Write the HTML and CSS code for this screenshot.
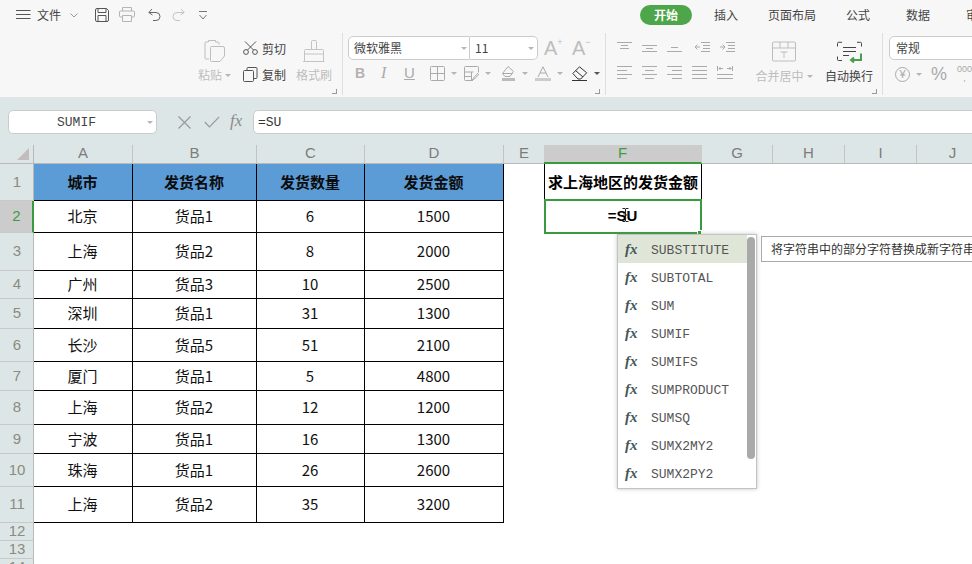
FILE: index.html
```html
<!DOCTYPE html>
<html lang="zh-CN">
<head>
<meta charset="utf-8">
<title>表格</title>
<link rel="stylesheet" href="styles.css">
</head>
<body>
<header class="ribbon">
  <div class="topbar">
    <div class="quick">
      <svg class="ic-menu" width="15" height="10" viewBox="0 0 15 10"><path d="M0 .5h14.5M0 4.5h14.5M0 8.5h14.5" stroke="#555" fill="none"/></svg>
      <span class="file">文件</span>
      <svg class="ic-chev" width="8" height="5" viewBox="0 0 8 5"><path d="M.5.5 4 4 7.5.5" stroke="#999" fill="none"/></svg>
      <svg class="ic-save" width="14" height="14" viewBox="0 0 14 14"><path d="M.5 2a1.5 1.5 0 0 1 1.5-1.5h9.500l2 2V12a1.500 1.500 0 0 1-1.500 1.500H2A1.500 1.500 0 0 1 .5 12zM3 .5v4h8v-4M3 13.500V7.500h8v6" stroke="#555" fill="none"/></svg>
      <svg class="ic-print" width="16" height="15" viewBox="0 0 16 15"><path d="M3.500 4V.5h9V4M3.500 10h-2a1 1 0 0 1-1-1V5a1 1 0 0 1 1-1h13a1 1 0 0 1 1 1v4a1 1 0 0 1-1 1h-2M3.500 8.500h9v6h-9z" stroke="#b5b5b5" fill="none"/></svg>
      <svg class="ic-undo" width="13" height="13" viewBox="0 0 13 13"><path d="M4 1 .8 4.500 4.500 7M1 4.500h7a4 4 0 0 1 0 8H5" stroke="#666" fill="none"/></svg>
      <svg class="ic-redo" width="13" height="13" viewBox="0 0 13 13"><path d="M9 1l3.200 3.500L8.500 7M12 4.500H5a4 4 0 0 0 0 8h3" stroke="#c4c4c4" fill="none"/></svg>
      <svg class="ic-more" width="9" height="9" viewBox="0 0 9 9"><path d="M0 .5h8M.5 4 4 8l3.500-4" stroke="#777" fill="none"/></svg>
    </div>
    <nav class="tabs">
      <span class="tab-on">开始</span>
      <span class="tab tab-first">插入</span>
      <span class="tab">页面布局</span>
      <span class="tab">公式</span>
      <span class="tab tab-far">数据</span>
      <span class="tab tab-far">审阅</span>
    </nav>
  </div>
  <div class="tools">
    <section class="group g-clip">
      <div class="big w35">
        <svg width="23" height="22" viewBox="0 0 23 22"><path d="M16 4.500V3a1 1 0 0 0-1-1h-2.500V.5h-7V2H3a1 1 0 0 0-1 1v15a1 1 0 0 0 1 1h3M7.500 7.500a1 1 0 0 1 1-1H20a1.500 1.500 0 0 1 1.500 1.500v8L17 21.500H8.500a1 1 0 0 1-1-1z" stroke="#bdbdbd" fill="none"/></svg>
        <span class="lbl off">粘贴<i class="caret"></i></span>
      </div>
      <div class="small-col">
        <div class="row-btn"><svg width="15" height="14" viewBox="0 0 15 14"><path d="M2 .5 10.500 9M13 .5 4.500 9" stroke="#555" fill="none"/><circle cx="3" cy="11" r="2.400" stroke="#555" fill="none"/><circle cx="12" cy="11" r="2.400" stroke="#555" fill="none"/></svg><span>剪切</span></div>
        <div class="row-btn"><svg width="15" height="15" viewBox="0 0 15 15"><path d="M4 3V1.500a1 1 0 0 1 1-1h8a1 1 0 0 1 1 1v9a1 1 0 0 1-1 1h-2.500M.5 4.500a1 1 0 0 1 1-1h8a1 1 0 0 1 1 1v9a1 1 0 0 1-1 1h-8a1 1 0 0 1-1-1z" stroke="#555" fill="none"/></svg><span>复制</span></div>
      </div>
      <div class="big w36">
        <svg width="22" height="22" viewBox="0 0 22 22"><path d="M8.500 9V1.500a1 1 0 0 1 1-1h3a1 1 0 0 1 1 1V9M1.500 21V10.500a1 1 0 0 1 1-1h17a1 1 0 0 1 1 1V21M0 21.500h21.500M1.500 14h19" stroke="#c4c4c4" fill="none"/></svg>
        <span class="lbl off">格式刷</span>
      </div>
      <i class="launch"></i>
    </section>
    <section class="group g-font">
      <div class="fontbox">
        <div class="fname">微软雅黑<i class="caret"></i></div>
        <div class="fsize">11<i class="caret"></i></div>
        <div class="grow-a"><span class="big-a">A</span><sup>+</sup></div>
        <div class="shrink-a"><span class="big-a">A</span><sup>−</sup></div>
      </div>
      <div class="fmt">
        <span class="slot w26 t-b">B</span>
        <span class="slot w23 t-i">I</span>
        <span class="slot w26 t-u">U</span>
        <span class="slot w34"><svg width="15" height="15" viewBox="0 0 15 15"><path d="M.5 1.500a1 1 0 0 1 1-1h12a1 1 0 0 1 1 1v12a1 1 0 0 1-1 1h-12a1 1 0 0 1-1-1zM7.500 .5v14M.5 7.500h14" stroke="#aaa" fill="none"/></svg><i class="caret"></i></span>
        <span class="slot w37"><svg width="15" height="15" viewBox="0 0 15 15"><path d="M.5 1.500a1 1 0 0 1 1-1h12a1 1 0 0 1 1 1V6M.5 1.500v12a1 1 0 0 0 1 1H9M.5 6h9M.5 10.500h7M7.500 6v8" stroke="#aaa" fill="none"/><path d="M14.500 6.500 9.500 12 8.500 14l2-1 5-5.500" stroke="#aaa" fill="none"/></svg><i class="caret"></i></span>
        <span class="slot w34"><svg width="15" height="15" viewBox="0 0 15 15"><path d="M7 .5 12.500 5.500 9 10.500H4L1.500 7.500zM1.500 7.500h10" stroke="#aaa" fill="none"/><path d="M1 12h13v3H1z" fill="#bbb"/></svg><i class="caret"></i></span>
        <span class="slot w37"><svg width="16" height="15" viewBox="0 0 16 15"><path d="M3 11 8 .8 13 11M5 7h6" stroke="#aaa" fill="none"/><path d="M0 12h16v3H0z" fill="#ccc"/></svg><i class="caret"></i></span>
        <span class="slot"><svg width="16" height="15" viewBox="0 0 16 15"><path d="M.8 7.500 7.500.8l7.200 6-6 6.200H6zM3.500 4.500l7.500 6.500M0 14.500h15" stroke="#333" fill="none"/></svg><i class="caret caret-d"></i></span>
      </div>
      <i class="launch"></i>
    </section>
    <section class="group g-align">
      <div class="aligns">
        <div class="arow">
          <svg class="al" width="15" height="10" viewBox="0 0 15 10"><path d="M0 .5h15M4 3.500h7M3 6.500h9" stroke="#aaa" fill="none"/></svg>
          <svg class="al" width="15" height="10" viewBox="0 0 15 10"><path d="M0 3.500h15M4 6.500h7M0 9.500h15" stroke="#aaa" fill="none"/></svg>
          <svg class="al" width="15" height="10" viewBox="0 0 15 10"><path d="M4 5.500h7M0 9.500h15" stroke="#aaa" fill="none"/></svg>
          <svg class="al al-ind" width="15" height="11" viewBox="0 0 15 11"><path d="M6 .5h9M8 3.500h7M8 6.500h7M6 9.500h9M5 5H0M2.500 2.500 0 5l2.500 2.500" stroke="#aaa" fill="none"/></svg>
          <svg class="al" width="15" height="11" viewBox="0 0 15 11"><path d="M6 .5h9M8 3.500h7M8 6.500h7M6 9.500h9M0 5h5M2.500 2.500 5 5 2.500 7.500" stroke="#aaa" fill="none"/></svg>
        </div>
        <div class="arow">
          <svg class="al" width="15" height="13" viewBox="0 0 15 13"><path d="M0 .5h15M0 4.500h10M0 8.500h15M0 12.500h10" stroke="#aaa" fill="none"/></svg>
          <svg class="al" width="15" height="13" viewBox="0 0 15 13"><path d="M0 .5h15M3 4.500h9M0 8.500h15M3 12.500h9" stroke="#aaa" fill="none"/></svg>
          <svg class="al" width="15" height="13" viewBox="0 0 15 13"><path d="M0 .5h15M5 4.500h10M0 8.500h15M5 12.500h10" stroke="#aaa" fill="none"/></svg>
          <svg class="al" width="15" height="13" viewBox="0 0 15 13"><path d="M0 .5h15M0 4.500h15M0 8.500h15M0 12.500h15" stroke="#aaa" fill="none"/></svg>
          <svg class="al" width="16" height="13" viewBox="0 0 16 13"><path d="M.5 0v5M15.500 0v5M6 2.500H2l1.500-1.500M2 2.500 3.500 4M10 2.500h4L12.500 1M14 2.500 12.500 4M0 8.500h16M0 12.500h16" stroke="#aaa" fill="none"/></svg>
        </div>
      </div>
      <div class="big w56 merge">
        <svg width="24" height="21" viewBox="0 0 24 21"><path d="M1.500.5h21a1 1 0 0 1 1 1v17a1 1 0 0 1-1 1h-21a1 1 0 0 1-1-1v-17a1 1 0 0 1 1-1zM.5 6.500h23M8 .5v6M16 .5v6M8.500 10.500h7M12 10.500v6" stroke="#bdbdbd" fill="none"/></svg>
        <span class="lbl off">合并居中<i class="caret"></i></span>
      </div>
      <div class="big w48 wrap">
        <svg width="25" height="21" viewBox="0 0 25 21"><path d="M5 .8H1.500a1 1 0 0 0-1 1V5M20 .8h3.500a1 1 0 0 1 1 1V5M.5 15v3a1 1 0 0 0 1 1H5M6 6h13M6 10h13M6 14h6" stroke="#444" fill="none"/><path d="M24 12v6.500H14M17 16l-3 2.500 3 2.500" stroke="#4aa04a" stroke-width="2" fill="none"/></svg>
        <span class="lbl on">自动换行</span>
      </div>
      <i class="launch"></i>
    </section>
    <section class="group g-num">
      <div class="numbox">常规</div>
      <div class="numrow">
        <span class="yen">¥</span><i class="caret"></i>
        <span class="pct">%</span>
        <span class="thou">000<em>,</em></span>
      </div>
    </section>
  </div>
</header>

<div class="formula">
  <div class="namebox">SUMIF<i class="caret"></i></div>
  <svg class="f-x" width="13" height="13" viewBox="0 0 13 13"><path d="M.5.5l12 12M12.500.5l-12 12" stroke="#999" stroke-width="1.200" fill="none"/></svg>
  <svg class="f-ok" width="16" height="12" viewBox="0 0 16 12"><path d="M.8 6 5.500 11 15.200.8" stroke="#999" stroke-width="1.200" fill="none"/></svg>
  <span class="f-fx">fx</span>
  <div class="finput">=SU</div>
</div>

<main class="sheet">
  <div class="grid">
    <div class="corner"><svg width="12" height="12" viewBox="0 0 12 12"><path d="M12 0v12H0z" fill="#c2bcbc"/></svg></div>
    <div class="ch">A</div><div class="ch">B</div><div class="ch">C</div><div class="ch">D</div><div class="ch">E</div><div class="ch ch-on">F</div><div class="ch">G</div><div class="ch">H</div><div class="ch">I</div><div class="ch">J</div>

    <div class="rh">1</div><div class="c hd">城市</div><div class="c hd">发货名称</div><div class="c hd">发货数量</div><div class="c hd">发货金额</div><div class="c q">求上海地区的发货金额</div>
    <div class="rh rh-on">2</div><div class="c">北京</div><div class="c">货品1</div><div class="c">6</div><div class="c">1500</div><div class="c active">=SU</div>
    <div class="rh">3</div><div class="c">上海</div><div class="c">货品2</div><div class="c">8</div><div class="c">2000</div>
    <div class="rh">4</div><div class="c">广州</div><div class="c">货品3</div><div class="c">10</div><div class="c">2500</div>
    <div class="rh">5</div><div class="c">深圳</div><div class="c">货品1</div><div class="c">31</div><div class="c">1300</div>
    <div class="rh">6</div><div class="c">长沙</div><div class="c">货品5</div><div class="c">51</div><div class="c">2100</div>
    <div class="rh">7</div><div class="c">厦门</div><div class="c">货品1</div><div class="c">5</div><div class="c">4800</div>
    <div class="rh">8</div><div class="c">上海</div><div class="c">货品2</div><div class="c">12</div><div class="c">1200</div>
    <div class="rh">9</div><div class="c">宁波</div><div class="c">货品1</div><div class="c">16</div><div class="c">1300</div>
    <div class="rh">10</div><div class="c">珠海</div><div class="c">货品1</div><div class="c">26</div><div class="c">2600</div>
    <div class="rh">11</div><div class="c">上海</div><div class="c">货品2</div><div class="c">35</div><div class="c">3200</div>
    <div class="rh">12</div>
    <div class="rh">13</div>
    <div class="rh">14</div>
  </div>

  <svg class="ibeam" width="7" height="14" viewBox="0 0 7 14"><path d="M.5.500h2.500L3.500 1 4 .5h2.500M3.500 1v12M.5 13.500H3l.5-.5.5.5h2.500M1.500 7h4" stroke="#222" fill="none"/></svg>
  <i class="handle"></i>

  <div class="popup">
    <ul class="fnlist">
      <li class="fn-on"><b>fx</b>SUBSTITUTE</li>
      <li><b>fx</b>SUBTOTAL</li>
      <li><b>fx</b>SUM</li>
      <li><b>fx</b>SUMIF</li>
      <li><b>fx</b>SUMIFS</li>
      <li><b>fx</b>SUMPRODUCT</li>
      <li><b>fx</b>SUMSQ</li>
      <li><b>fx</b>SUMX2MY2</li>
      <li><b>fx</b>SUMX2PY2</li>
    </ul>
    <i class="thumb"></i>
  </div>
  <div class="tip">将字符串中的部分字符替换成新字符串</div>
</main>
</body>
</html>
```

FILE: styles.css
```css
* { box-sizing: border-box; }
html, body { margin: 0; height: 564px; width: 972px; overflow: hidden; background: #fff; }
body { font-family: "Noto Sans CJK SC", "Liberation Sans", sans-serif; color: #333; font-size: 12px; }
i { display: block; font-style: normal; }

/* ribbon */
.ribbon { height: 98px; background: #f7f7f7; border-bottom: 1px solid #e2e5e5; }
.topbar { height: 30px; display: flex; white-space: nowrap; overflow: hidden; }
.quick { width: 640px; display: flex; align-items: flex-start; flex: none; padding-left: 16px; }
.quick svg { flex: none; }
.ic-menu { margin-top: 10px; }
.file { margin: 6px 0 0 6px; line-height: 18px; color: #444; }
.ic-chev { margin: 13px 0 0 9px; }
.ic-save { margin: 8px 0 0 17px; }
.ic-print { margin: 7px 0 0 10px; }
.ic-undo { margin: 8px 0 0 13px; }
.ic-redo { margin: 8px 0 0 11px; }
.ic-more { margin: 11px 0 0 14px; }
.tabs { display: flex; align-items: flex-start; gap: 30px; flex: none; }
.tab-on { width: 52px; height: 20px; margin-top: 5px; border-radius: 10px; background: #4ea64a; color: #fff; font-weight: 700; text-align: center; line-height: 20px; }
.tab { line-height: 18px; margin-top: 6px; color: #444; }
.tab-first { margin-left: -8px; }
.tab-far { margin-left: 6px; }

.tools { height: 67px; display: flex; padding-left: 197px; }
.group { position: relative; display: flex; height: 62px; margin-top: 3px; border-right: 1px solid #dbdfdf; flex: none; }
.launch { position: absolute; right: 5px; bottom: 1px; width: 5px; height: 5px; border-right: 1px solid #999; border-bottom: 1px solid #999; }

.big { display: flex; flex-direction: column; align-items: center; padding-top: 7px; flex: none; }
.big svg { height: 22px; flex: none; }
.lbl { margin-top: 4px; line-height: 18px; white-space: nowrap; display: flex; align-items: center; }
.off { color: #bdbdbd; }
.on { color: #444; }
.merge svg, .wrap svg { margin-top: 1px; }
.caret { width: 0; height: 0; border: 3px solid transparent; border-top: 3px solid #b5b5b5; border-bottom-width: 0; margin-left: 3px; flex: none; }
.caret-d { border-top-color: #555; }
.w35 { width: 35px; }
.w36 { width: 36px; margin-left: 11px; }
.w48 { width: 48px; margin-left: 13px; }
.w56 { width: 56px; margin-left: 11px; }

.g-clip { width: 146px; }
.small-col { margin-left: 11px; width: 42px; display: flex; flex-direction: column; padding-top: 3px; }
.row-btn { display: flex; align-items: center; gap: 4px; height: 24px; color: #444; white-space: nowrap; }
.row-btn + .row-btn { margin-top: 2px; }
.row-btn svg { flex: none; }

.g-font { width: 263px; flex-direction: column; padding: 3px 0 0 5px; }
.fontbox { display: flex; height: 24px; }
.fname, .fsize { background: #fff; border: 1px solid #ccc; display: flex; align-items: center; justify-content: space-between; line-height: 18px; color: #444; padding-left: 5px; height: 24px; }
.fname { width: 122px; border-radius: 5px 0 0 5px; }
.fsize { width: 68px; border-left: 0; border-radius: 0 5px 5px 0; padding-right: 3px; }
.fname .caret { margin-right: 2px; }
.grow-a, .shrink-a { display: flex; color: #bdbdbd; line-height: 24px; }
.grow-a { margin-left: 6px; width: 28px; }
.shrink-a { width: 20px; }
.big-a { font: 400 20px/24px "Liberation Sans", sans-serif; }
.fontbox sup { font: 400 9px/12px "Liberation Sans", sans-serif; vertical-align: baseline; }
.fmt { display: flex; align-items: center; height: 26px; padding-left: 7px; }
.slot { display: flex; align-items: center; flex: none; gap: 3px; height: 26px; }
.slot .caret { margin-left: 3px; }
.w23 { width: 23px; }
.w26 { width: 26px; }
.w34 { width: 34px; }
.w37 { width: 37px; }
.t-b { font: 700 14px/26px "Liberation Sans", sans-serif; color: #b8b0b0; }
.t-i { font: italic 400 16px/26px "Liberation Serif", serif; color: #aaa; }
.t-u { font: 400 15px/26px "Liberation Sans", sans-serif; color: #aaa; text-decoration: underline; }

.g-align { width: 277px; padding-left: 11px; }
.aligns { width: 128px; flex: none; padding-top: 9px; display: flex; flex-direction: column; gap: 11px; }
.arow { display: flex; gap: 10px; height: 13px; }
.al { flex: none; }
.al-ind { margin-left: 3px; }

.g-num { width: 120px; flex-direction: column; padding: 3px 0 0 6px; border-right: 0; }
.numbox { width: 115px; height: 24px; background: #fff; border: 1px solid #ccc; border-radius: 5px; padding-left: 6px; line-height: 22px; color: #444; }
.numrow { display: flex; align-items: center; height: 26px; margin-top: 1px; padding-left: 6px; color: #aaa; }
.yen { width: 15px; height: 15px; border: 1px solid #aaa; border-radius: 50%; font: 400 11px/13px "Liberation Sans", sans-serif; text-align: center; flex: none; }
.numrow .caret { margin-left: 6px; }
.pct { margin-left: 9px; font: 400 18px/26px "Liberation Sans", sans-serif; width: 26px; flex: none; }
.thou { font: 400 9px/9px "Liberation Sans", sans-serif; }
.thou em { display: block; font-style: normal; text-align: center; }

/* formula bar */
.formula { height: 47px; background: #dde6e6; display: flex; align-items: flex-start; padding: 12px 0 0 8px; }
.namebox { position: relative; width: 149px; height: 24px; background: #fff; border: 1px solid #ccc; border-radius: 5px; font: 400 13px/24px "Liberation Mono", monospace; color: #444; text-align: center; padding-right: 12px; flex: none; }
.namebox .caret { position: absolute; right: 3px; top: 10px; }
.f-x { margin: 6px 0 0 21px; flex: none; }
.f-ok { margin: 6px 0 0 13px; flex: none; }
.f-fx { margin: 1px 0 0 10px; font: italic 400 17px/20px "Liberation Serif", serif; color: #8a8a8a; width: 16px; flex: none; }
.finput { margin-left: 7px; width: 740px; height: 24px; background: #fff; border: 1px solid #ccc; border-radius: 5px 0 0 5px; padding-left: 4px; font: 400 13px/24px "Liberation Mono", monospace; color: #333; flex: none; }

/* sheet */
.sheet { position: relative; height: 419px; overflow: hidden; background: #fff; }
.grid {
  display: grid;
  grid-template-columns: 34px 99px 124px 108px 139px 41px 157px 71px 72px 72px 72px;
  grid-template-rows: 19px 37px 32px 38px 28px 30px 33px 29px 34px 29px 33px 36px 18px 18px 18px;
  width: 1044px;
}
.corner { background: #dde6e6; border-right: 1px solid #b9b9b9; border-bottom: 1px solid #b9b9b9; padding: 3px 0 0 17px; }
.corner svg { display: block; }
.ch { background: #dde6e6; border-right: 1px solid #c3c3c3; border-bottom: 1px solid #b9b9b9; color: #7c7c7c; font: 400 15px/16px "Liberation Sans", sans-serif; text-align: center; }
.ch-on { background: #cccccc; color: #3f9b43; border-bottom: 2px solid #3a9a3e; border-right-color: #ccc; margin-left: -1px; }
.rh { grid-column: 1; background: #dde6e6; border-right: 1px solid #b9b9b9; border-bottom: 1px solid #c8c8c8; color: #8b8b80; font: 400 15px/1 "Liberation Sans", sans-serif; display: flex; align-items: center; justify-content: center; padding: 0 0 2px 1px; }
.rh-on { background: #cccccc; color: #3f9b43; border-right: 2px solid #3a9a3e; }
.c { border-right: 1px solid #000; border-bottom: 1px solid #000; display: flex; align-items: center; justify-content: center; font-size: 15px; color: #111; white-space: nowrap; padding: 0 1px 2px 0; }
.hd { background: #5b9bd6; font-weight: 700; color: #0c0c0c; }
.q, .active { grid-column: 7; font-weight: 700; color: #000; }
.q { border-left: 1px solid #000; margin-left: -1px; padding-right: 0; }
.active { border: 2px solid #3a9a3e; margin: -2px 0 -1px -1px; font-family: "Liberation Sans", sans-serif; }

.ibeam { position: absolute; left: 622px; top: 63px; }
.handle { position: absolute; left: 697px; top: 85px; width: 5px; height: 5px; background: #3a9a3e; border: 1px solid #fff; }

.popup { position: absolute; left: 617px; top: 89px; width: 140px; height: 255px; background: #fff; border: 1px solid #c0c4c4; box-shadow: 0 0 4px rgba(120, 130, 130, .45); }
.fnlist { list-style: none; margin: 0; padding: 0; }
.fnlist li { display: flex; align-items: center; height: 28px; width: 129px; padding: 4px 0 0 7px; font: 400 13px/28px "Liberation Mono", monospace; color: #555; }
.fnlist b { width: 26px; height: 24px; margin-top: -5px; flex: none; font: italic 700 15px/24px "Liberation Serif", serif; color: #46575a; }
.fn-on { background: #dfe6d8; }
.thumb { position: absolute; left: 129px; top: 2px; width: 8px; height: 222px; border-radius: 4px; background: #a9a9a9; }
.tip { position: absolute; left: 761px; top: 91px; width: 240px; height: 26px; background: #fff; border: 1px solid #aaa; padding-left: 9px; font-size: 12px; line-height: 24px; color: #333; white-space: nowrap; overflow: hidden; }
```
